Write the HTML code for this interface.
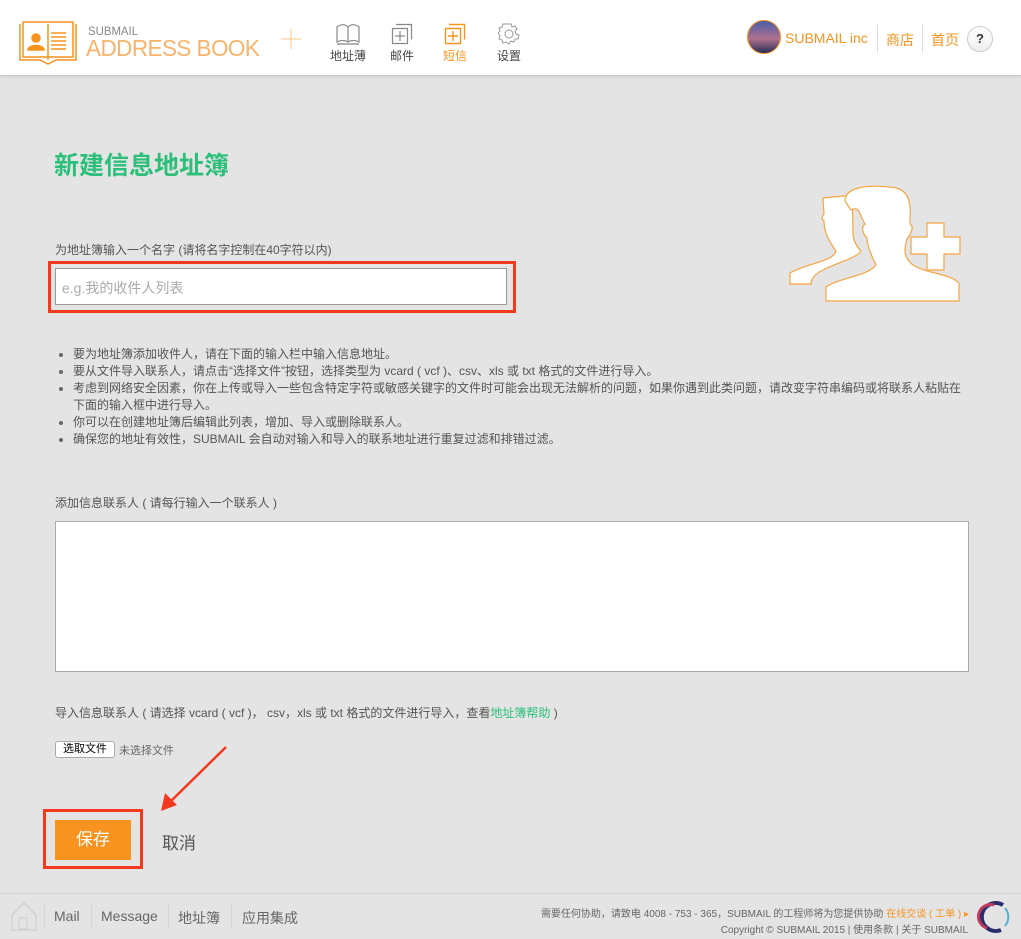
<!DOCTYPE html>
<html><head><meta charset="utf-8">
<style>
*{margin:0;padding:0;box-sizing:border-box}
body{width:1021px;height:939px;background:#e4e4e4;font-family:"Liberation Sans","Noto Sans CJK SC",sans-serif;position:relative;overflow:hidden;color:#555}
.hdr{position:absolute;left:0;top:0;width:1021px;height:76px;background:#fff;border-bottom:1px solid #ccc;box-shadow:0 1px 2px rgba(0,0,0,.1)}
.abs{position:absolute}
.nav{position:absolute;top:22px;text-align:center;font-size:12px;color:#444;width:44px}
.nav svg{display:block;margin:0 auto 2px}
.org{color:#f7931e}
ul{list-style:none}
li{position:relative;padding-left:18px;font-size:12px;line-height:17px;color:#555}
li:before{content:"";position:absolute;left:4px;top:7px;width:4px;height:4px;border-radius:50%;background:#666}
</style></head><body>
<div class="hdr">
  <svg class="abs" style="left:19px;top:21px" width="58" height="44" viewBox="0 0 58 44" fill="none" stroke="#f7931e" stroke-width="1.5">
    <path d="M1 3v36h20l8 4 8-4h20V3"/><path d="M4 1h50v35H4z"/><path d="M29 3v36"/>
    <circle cx="17" cy="17" r="4" fill="#f7931e"/><path d="M9 29c0-6 16-6 16 0z" fill="#f7931e"/>
    <path d="M32 12h15M32 16h15M32 20h15M32 24h15M32 28h15"/>
  </svg>
  <div class="abs" style="left:88px;top:24px;font-size:12px;color:#888;transform:scaleX(0.95);transform-origin:left">SUBMAIL</div>
  <div class="abs" style="left:86px;top:35px;font-size:23px;color:#fbb36a;letter-spacing:-0.6px;-webkit-text-stroke:0;font-weight:normal;transform:scaleX(0.98);transform-origin:left">ADDRESS BOOK</div>
  <svg class="abs" style="left:281px;top:29px" width="20" height="20"><path d="M10 0v20M0 10h20" stroke="#fbc48a" stroke-width="1"/></svg>
  <div class="nav" style="left:326px;top:23px"><svg width="24" height="22" viewBox="0 0 24 22" fill="none" stroke="#888" stroke-width="1.2"><path d="M1 4c4-3 8-3 11 0 3-3 7-3 11 0v15c-4-2-8-2-11 0-3-2-7-2-11 0z M12 4v15"/><path d="M1 21h22"/></svg>地址薄</div>
  <div class="nav" style="left:380px;top:23px"><svg width="22" height="22" viewBox="0 0 22 22" fill="none" stroke="#888" stroke-width="1.2"><path d="M1.5 5.5h15v15h-15z M5 1.5h15.5v15"/><path d="M9 8v10M4 13h10"/></svg>邮件</div>
  <div class="nav" style="left:433px;top:23px;color:#f7931e"><svg width="22" height="22" viewBox="0 0 22 22" fill="none" stroke="#f7931e" stroke-width="1.4"><path d="M1.5 5.5h15v15h-15z M5 1.5h15.5v15"/><path d="M9 8v10M4 13h10"/></svg>短信</div>
  <div class="nav" style="left:487px;top:23px"><svg width="22" height="22" viewBox="0 0 22 22" fill="none" stroke="#999"><circle cx="11" cy="11" r="4"/><path d="M9 1h4l1 3 3-1 2 3-2 2 1 3 3 1-1 4-3 0-1 3-3-1-2 3-3-2-3 1-1-3-3-1 1-3-2-3 2-2-1-3 3-1 1-3z"/></svg>设置</div>
  <div class="abs" style="left:747px;top:20px;width:34px;height:34px;border-radius:50%;border:1px solid #f7931e;background:linear-gradient(#4a5fa8,#b07090 55%,#2a2f55)"></div>
  <div class="abs org" style="left:785px;top:30px;font-size:14px">SUBMAIL inc</div>
  <div class="abs" style="left:877px;top:25px;width:1px;height:28px;background:#ddd"></div>
  <div class="abs org" style="left:886px;top:30px;font-size:14px">商店</div>
  <div class="abs" style="left:922px;top:25px;width:1px;height:28px;background:#ddd"></div>
  <div class="abs org" style="left:931px;top:30px;font-size:14px">首页</div>
  <div class="abs" style="left:967px;top:26px;width:26px;height:26px;border-radius:50%;border:1px solid #ccc;background:linear-gradient(#fff,#eee);text-align:center;line-height:24px;font-weight:bold;font-size:13px;color:#333">?</div>
</div>

<div class="abs" style="left:54px;top:146px;font-size:25px;font-weight:bold;color:#2bbf7a">新建信息地址簿</div>

<svg class="abs" style="left:789px;top:176px" width="180" height="126" viewBox="0 0 180 126" fill="#fff" stroke="#f7a440" stroke-width="1.2">
  <path d="M34 22l29-3 1 30c-1 13 2 20 8 26-4 7-25 12-38 19-9 4-12 10-12 14H1V97c17-10 43-11 46-22-8-11-12-20-12-30-3-2-2-5 0-7z"/>
  <path d="M56 25c0-15 25-16 45-14 24 1 20 24 20 37 5 3 0 11-3 15-3 10-4 18 6 26 14 9 36 8 46 18v18H37v-14c15-10 40-10 50-22-5-10-9-20-9-27-3-3-7-10-2-14-6-9-5-19-14-14z"/>
  <path d="M138 47h17v14h16v17h-16v16h-17V78h-16V61h16z"/>
</svg>

<div class="abs" style="left:55px;top:241px;font-size:12px;color:#555">为地址簿输入一个名字 (请将名字控制在40字符以内)</div>
<div class="abs" style="left:48px;top:261px;width:468px;height:52px;border:3px solid #f33a1f"></div>
<div class="abs" style="left:55px;top:268px;width:452px;height:37px;background:#fff;border:1px solid #999;font-size:14px;color:#aaa;padding:9px 6px">e.g.我的收件人列表</div>

<ul class="abs" style="left:55px;top:346px;width:912px">
<li>要为地址簿添加收件人，请在下面的输入栏中输入信息地址。</li>
<li>要从文件导入联系人，请点击“选择文件”按钮，选择类型为 vcard ( vcf )、csv、xls 或 txt 格式的文件进行导入。</li>
<li>考虑到网络安全因素，你在上传或导入一些包含特定字符或敏感关键字的文件时可能会出现无法解析的问题，如果你遇到此类问题，请改变字符串编码或将联系人粘贴在<br>下面的输入框中进行导入。</li>
<li>你可以在创建地址簿后编辑此列表，增加、导入或删除联系人。</li>
<li>确保您的地址有效性，SUBMAIL 会自动对输入和导入的联系地址进行重复过滤和排错过滤。</li>
</ul>

<div class="abs" style="left:55px;top:494px;font-size:12px">添加信息联系人 ( 请每行输入一个联系人 )</div>
<div class="abs" style="left:55px;top:521px;width:914px;height:151px;background:#fff;border:1px solid #aaa"></div>

<div class="abs" style="left:55px;top:704px;font-size:12px">导入信息联系人 ( 请选择 vcard ( vcf )， csv，xls 或 txt 格式的文件进行导入，查看<span style="color:#2bbf7a">地址簿帮助</span> )</div>
<div class="abs" style="left:55px;top:741px;width:60px;height:17px;background:#fff;border:1px solid #aaa;border-radius:3px;font-size:11px;color:#000;text-align:center;line-height:15px">选取文件</div>
<div class="abs" style="left:119px;top:742px;font-size:11px;color:#666">未选择文件</div>

<svg class="abs" style="left:155px;top:743px" width="80" height="70"><path d="M71 4L14 60" stroke="#f33a1f" stroke-width="2.5"/><path d="M6 68l4-18 12 12z" fill="#f33a1f"/></svg>

<div class="abs" style="left:43px;top:809px;width:100px;height:60px;border:3px solid #f33a1f"></div>
<div class="abs" style="left:55px;top:820px;width:76px;height:40px;background:#f7931e;color:#fff;font-size:17px;text-align:center;line-height:40px">保存</div>
<div class="abs" style="left:162px;top:829px;font-size:17px;color:#555">取消</div>

<div class="abs" style="left:0;top:893px;width:1021px;height:1px;background:#d4d4d4"></div>
<svg class="abs" style="left:10px;top:901px" width="30" height="30" fill="none" stroke="#ccc"><path d="M2 14L14 2l12 12v15H2z"/><path d="M9 17h8v11H9z"/></svg>
<div class="abs" style="left:44px;top:903px;width:1px;height:26px;background:#d4d4d4"></div>
<div class="abs" style="left:54px;top:908px;font-size:14px;color:#666">Mail</div>
<div class="abs" style="left:91px;top:903px;width:1px;height:26px;background:#d4d4d4"></div>
<div class="abs" style="left:101px;top:908px;font-size:14px;color:#666">Message</div>
<div class="abs" style="left:168px;top:903px;width:1px;height:26px;background:#d4d4d4"></div>
<div class="abs" style="left:178px;top:908px;font-size:14px;color:#666">地址簿</div>
<div class="abs" style="left:231px;top:903px;width:1px;height:26px;background:#d4d4d4"></div>
<div class="abs" style="left:242px;top:908px;font-size:14px;color:#666">应用集成</div>
<div class="abs" style="right:52px;top:905px;font-size:10px;color:#666;text-align:right">需要任何协助，请致电 4008 - 753 - 365，SUBMAIL 的工程师将为您提供协助 <span class="org">在线交谈 ( 工单 ) ▸</span></div>
<div class="abs" style="right:53px;top:921px;font-size:10px;color:#666">Copyright © SUBMAIL 2015 | 使用条款 | 关于 SUBMAIL</div>
<svg class="abs" style="left:977px;top:900px" width="34" height="34" fill="none" stroke-width="4"><path d="M26 5A14 14 0 1 0 24 30" stroke="#2a2f6b"/><path d="M10 28A12 12 0 0 1 17 5" stroke="#c3385a" stroke-width="3"/><path d="M28 8a14 14 0 0 1 0 18" stroke="#4fb2d6" stroke-width="2"/></svg>
</body></html>
